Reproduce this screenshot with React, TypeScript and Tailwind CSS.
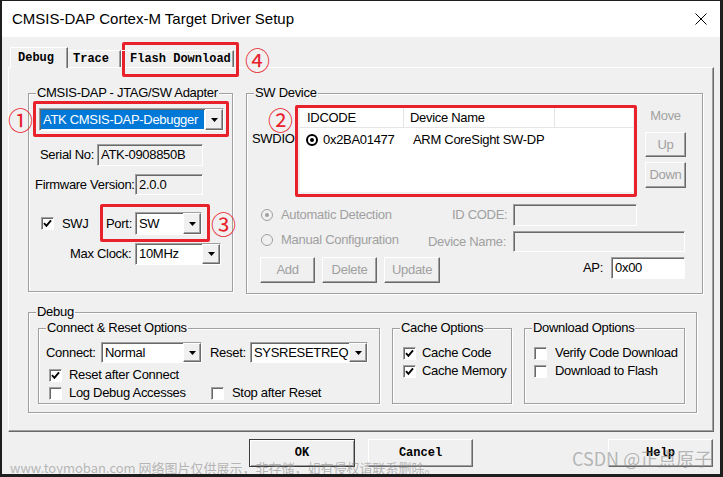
import React from "react";

const raised =
  "border border-t-white border-l-white border-r-[#696969] border-b-[#696969] shadow-[inset_-1px_-1px_0_#a0a0a0] bg-[#f0f0f0]";
const sunken =
  "border border-t-[#a0a0a0] border-l-[#a0a0a0] border-r-white border-b-white shadow-[inset_1px_1px_0_#696969]";
const etched = "border border-[#a0a0a0] shadow-[inset_1px_1px_0_#fff,1px_1px_0_#fff]";
const mono = "font-['Liberation_Mono',monospace] font-bold text-[12px]";
const redBox = "absolute border-[3px] border-[#e8212b] rounded-[2px]";
const num = "absolute text-[25px] leading-[24px] text-[#e8212b] font-['Noto_Sans_CJK_SC',sans-serif]";
const dim = "text-[#a0a0a0]";

function Arrow() {
  return (
    <svg width="7" height="4" viewBox="0 0 7 4">
      <path d="M0 0H7L3.5 4Z" fill="#000" />
    </svg>
  );
}

function Combo({ value, className = "", selected = false }: { value: string; className?: string; selected?: boolean }) {
  return (
    <div className={`${sunken} bg-white flex ${className}`}>
      <div className="flex-1 flex items-center p-[1px] min-w-0">
        {selected ? (
          <span className="h-full w-full bg-[#0078d7] text-white flex items-center pl-[2px]">{value}</span>
        ) : (
          <span className="pl-[2px] whitespace-nowrap">{value}</span>
        )}
      </div>
      <div className={`${raised} w-[18px] h-full flex items-center justify-center shrink-0`}>
        <Arrow />
      </div>
    </div>
  );
}

function Field({ children, className = "" }: { children?: React.ReactNode; className?: string }) {
  return <div className={`${sunken} flex items-center pl-[3px] ${className}`}>{children}</div>;
}

function Check({ checked = false, className = "" }: { checked?: boolean; className?: string }) {
  return (
    <span className={`${sunken} w-[13px] h-[13px] bg-white flex items-center justify-center shrink-0 ${className}`}>
      {checked && (
        <svg width="9" height="9" viewBox="0 0 9 9">
          <path d="M1 4.2L3.4 6.8L8 1.4" stroke="#000" strokeWidth="1.9" fill="none" />
        </svg>
      )}
    </span>
  );
}

function Radio({ checked = false, className = "" }: { checked?: boolean; className?: string }) {
  return (
    <span
      className={`w-[12px] h-[12px] rounded-full border border-[#a0a0a0] bg-[#f0f0f0] flex items-center justify-center shrink-0 ${className}`}
    >
      {checked && <span className="w-[4px] h-[4px] rounded-full bg-[#a0a0a0]" />}
    </span>
  );
}

function Btn({ children, className = "" }: { children: React.ReactNode; className?: string }) {
  return <div className={`${raised} flex items-center justify-center shrink-0 ${className}`}>{children}</div>;
}

function Group({ label, className = "", children }: { label: string; className?: string; children?: React.ReactNode }) {
  return (
    <div className={`relative shrink-0 ${etched} ${className}`}>
      <span className="absolute left-[7px] -top-[9px] bg-[#f0f0f0] px-[1px] leading-[16px] whitespace-nowrap">
        {label}
      </span>
      {children}
    </div>
  );
}

export default function App() {
  return (
    <div className="w-[723px] h-[477px] bg-[#1e1e1e] pl-[2px] pt-[1px]">
      <div className="relative w-[718px] h-[473px] bg-[#f0f0f0] flex flex-col font-['Liberation_Sans',Arial,sans-serif] text-[13px] tracking-[-0.3px] text-black leading-[16px] overflow-hidden">
        {/* title bar */}
        <div className="h-[36px] bg-white flex items-center pl-[10px] pr-[13px] shrink-0">
          <span className="text-[15px] tracking-normal">CMSIS-DAP Cortex-M Target Driver Setup</span>
          <svg className="ml-auto" width="12" height="12" viewBox="0 0 12 12">
            <path d="M0.5 0.5L11.5 11.5M11.5 0.5L0.5 11.5" stroke="#000" strokeWidth="1" />
          </svg>
        </div>

        {/* body */}
        <div className="flex flex-col pl-[6px] pt-[10px]">
          {/* tabs */}
          <div className={`relative z-10 flex items-end h-[20px] pl-[2px] ${mono} tracking-normal`}>
            <div className="h-[21px] -mb-[1px] w-[58px] bg-[#f0f0f0] border-t border-l border-r border-t-white border-l-white border-r-[#696969] shadow-[inset_-1px_0_0_#a0a0a0] pl-[7px] pt-[2px]">
              Debug
            </div>
            <div className="h-[17px] w-[53px] border-t border-r border-t-white border-r-[#696969] shadow-[inset_-1px_0_0_#a0a0a0] pl-[5px]">
              Trace
            </div>
            <div className="h-[17px] w-[113px] border-t border-l border-r border-t-white border-l-white border-r-[#696969] shadow-[inset_-1px_0_0_#a0a0a0] pl-[8px]">
              Flash Download
            </div>
          </div>

          {/* panel */}
          <div className="w-[706px] h-[365px] border border-t-white border-l-white border-r-[#696969] border-b-[#696969] shadow-[inset_-1px_-1px_0_#a0a0a0] flex flex-col pl-[19px] pt-[25px]">
            <div className="flex items-start gap-[13px]">
              {/* adapter */}
              <Group label="CMSIS-DAP - JTAG/SW Adapter" className="w-[205px] h-[199px] flex flex-col">
                <Combo selected value="ATK CMSIS-DAP-Debugger" className="mt-[14px] ml-[10px] w-[185px] h-[23px]" />
                <div className="mt-[13px] h-[22px] flex items-center">
                  <span className="ml-[11px] w-[57px]">Serial No:</span>
                  <Field className="w-[106px] h-full bg-[#f0f0f0]">ATK-0908850B</Field>
                </div>
                <div className="mt-[8px] h-[21px] flex items-center">
                  <span className="ml-[6px] w-[100px]">Firmware Version:</span>
                  <Field className="w-[68px] h-full bg-[#f0f0f0]">2.0.0</Field>
                </div>
                <div className="mt-[17px] h-[23px] flex items-center">
                  <Check checked className="ml-[12px]" />
                  <span className="ml-[8px] w-[44px]">SWJ</span>
                  <span className="w-[29px]">Port:</span>
                  <Combo value="SW" className="w-[67px] h-full" />
                </div>
                <div className="mt-[8px] h-[22px] flex items-center">
                  <span className="ml-[41px] w-[65px]">Max Clock:</span>
                  <Combo value="10MHz" className="w-[86px] h-full" />
                </div>
              </Group>

              {/* sw device */}
              <Group label="SW Device" className="w-[457px] h-[201px] flex flex-col">
                <div className="mt-[14px] flex items-start">
                  <span className="ml-[5px] w-[48px] pt-[23px]">SWDIO</span>
                  <div className="w-[333px] h-[84px] bg-white flex flex-col">
                    <div className="h-[20px] flex border-b border-[#e5e5e5] items-center">
                      <span className="w-[104px] h-full flex items-center pl-[7px] border-r border-[#e5e5e5]">IDCODE</span>
                      <span className="w-[151px] h-full flex items-center pl-[6px] border-r border-[#e5e5e5]">Device Name</span>
                    </div>
                    <div className="mt-[4px] h-[16px] flex items-center">
                      <div className="w-[104px] flex items-center pl-[6px]">
                        <span className="w-[12px] h-[12px] rounded-full border-2 border-black bg-white flex items-center justify-center shrink-0">
                          <span className="w-[4px] h-[4px] rounded-full bg-black" />
                        </span>
                        <span className="ml-[5px]">0x2BA01477</span>
                      </div>
                      <span className="pl-[9px]">ARM CoreSight SW-DP</span>
                    </div>
                  </div>
                  <div className="ml-[12px] w-[41px] flex flex-col items-center">
                    <span className={`${dim} h-[16px]`}>Move</span>
                    <Btn className={`${dim} mt-[8px] w-[41px] h-[25px]`}>Up</Btn>
                    <Btn className={`${dim} mt-[5px] w-[41px] h-[26px]`}>Down</Btn>
                  </div>
                </div>

                <div className="mt-[12px] h-[22px] flex items-center">
                  <div className="w-[205px] flex items-center">
                    <Radio checked className="ml-[14px]" />
                    <span className={`${dim} ml-[8px]`}>Automatic Detection</span>
                  </div>
                  <span className={`${dim} w-[61px]`}>ID CODE:</span>
                  <Field className="w-[124px] h-full bg-[#f0f0f0]" />
                </div>
                <div className="mt-[5px] h-[21px] flex items-center">
                  <div className="w-[181px] flex items-center -mt-[4px]">
                    <Radio className="ml-[14px]" />
                    <span className={`${dim} ml-[8px]`}>Manual Configuration</span>
                  </div>
                  <span className={`${dim} w-[85px]`}>Device Name:</span>
                  <Field className="w-[172px] h-full bg-[#f0f0f0]" />
                </div>
                <div className="mt-[5px] h-[26px] flex items-start">
                  <Btn className={`${dim} ml-[13px] w-[55px] h-[26px]`}>Add</Btn>
                  <Btn className={`${dim} ml-[7px] w-[55px] h-[26px]`}>Delete</Btn>
                  <Btn className={`${dim} ml-[7px] w-[56px] h-[26px]`}>Update</Btn>
                  <span className="ml-[143px] w-[28px] h-[22px] flex items-center">AP:</span>
                  <Field className="w-[74px] h-[22px] bg-white">0x00</Field>
                </div>
              </Group>
            </div>

            {/* debug */}
            <Group label="Debug" className="mt-[18px] w-[669px] h-[101px]">
              <div className="mt-[15px] flex items-start">
                <Group label="Connect & Reset Options" className="ml-[9px] w-[342px] h-[76px] flex flex-col">
                  <div className="mt-[13px] h-[21px] flex items-center">
                    <span className="ml-[7px] w-[55px]">Connect:</span>
                    <Combo value="Normal" className="w-[101px] h-full" />
                    <span className="w-[48px] pl-[8px]">Reset:</span>
                    <Combo value="SYSRESETREQ" className="w-[118px] h-full" />
                  </div>
                  <div className="mt-[4px] h-[16px] flex items-center">
                    <Check checked className="ml-[10px]" />
                    <span className="ml-[7px]">Reset after Connect</span>
                  </div>
                  <div className="mt-[2px] h-[16px] flex items-center">
                    <Check className="ml-[10px]" />
                    <span className="w-[149px] pl-[7px]">Log Debug Accesses</span>
                    <Check />
                    <span className="ml-[8px]">Stop after Reset</span>
                  </div>
                </Group>
                <Group label="Cache Options" className="ml-[12px] w-[120px] h-[76px] flex flex-col">
                  <div className="mt-[16px] h-[16px] flex items-center">
                    <Check checked className="ml-[10px]" />
                    <span className="ml-[6px]">Cache Code</span>
                  </div>
                  <div className="mt-[2px] h-[16px] flex items-center">
                    <Check checked className="ml-[10px]" />
                    <span className="ml-[6px]">Cache Memory</span>
                  </div>
                </Group>
                <Group label="Download Options" className="ml-[12px] w-[161px] h-[76px] flex flex-col">
                  <div className="mt-[16px] h-[16px] flex items-center">
                    <Check className="ml-[9px]" />
                    <span className="ml-[8px]">Verify Code Download</span>
                  </div>
                  <div className="mt-[2px] h-[16px] flex items-center">
                    <Check className="ml-[9px]" />
                    <span className="ml-[8px]">Download to Flash</span>
                  </div>
                </Group>
              </div>
            </Group>
          </div>

          {/* dialog buttons */}
          <div className={`mt-[7px] h-[28px] flex ${mono} tracking-normal`}>
            <div className="ml-[241px] w-[106px] h-[28px] border border-[#3c3c3c] shadow-[inset_1px_1px_0_#fff,inset_-1px_-1px_0_#a0a0a0] flex items-center justify-center">
              OK
            </div>
            <Btn className="ml-[13px] w-[105px] h-[28px]">Cancel</Btn>
            <Btn className="ml-[135px] w-[105px] h-[28px]">Help</Btn>
          </div>
        </div>

        {/* annotations */}
        <div className={`${redBox} left-[31px] top-[100px] w-[196px] h-[36px]`} />
        <div className={`${redBox} left-[293px] top-[104px] w-[342px] h-[92px]`} />
        <div className={`${redBox} left-[98px] top-[203px] w-[110px] h-[38px]`} />
        <div className={`${redBox} left-[120px] top-[41px] w-[117px] h-[35px]`} />
        <span className={`${num} left-[6px] top-[106px]`}>①</span>
        <span className={`${num} left-[266px] top-[106px]`}>②</span>
        <span className={`${num} left-[209px] top-[210px]`}>③</span>
        <span className={`${num} left-[243px] top-[46px]`}>④</span>

        {/* watermarks */}
        <span className="absolute left-[8px] top-[459px] text-[13px] leading-[16px] tracking-normal text-[rgba(130,130,130,0.55)] font-['Noto_Sans_CJK_SC',sans-serif] whitespace-nowrap">
          www.toymoban.com 网络图片仅供展示，非存储，如有侵权请联系删除。
        </span>
        <span className="absolute left-[570px] top-[445px] text-[18px] leading-[24px] tracking-normal text-[rgba(130,130,130,0.55)] font-['Noto_Sans_CJK_SC',sans-serif] whitespace-nowrap">
          CSDN @正点原子
        </span>
      </div>
    </div>
  );
}
